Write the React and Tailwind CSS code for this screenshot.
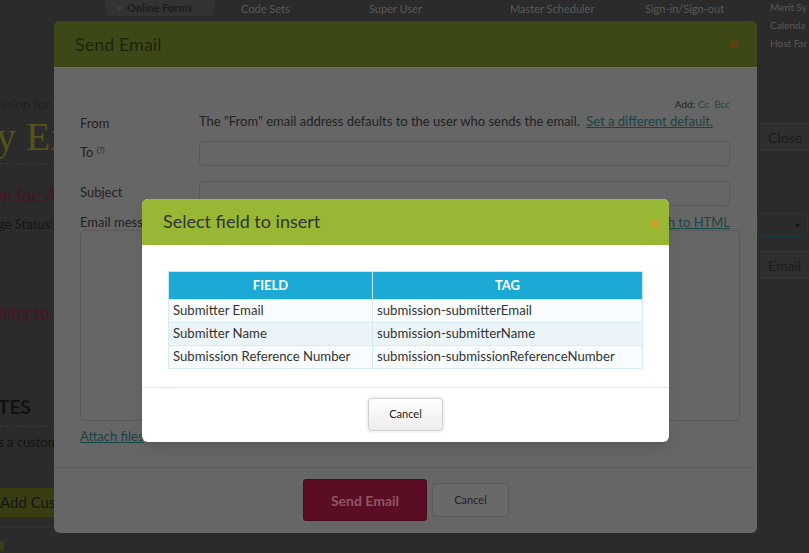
import { X } from 'lucide-react'

const font = { fontFamily: 'Lato, "Open Sans", sans-serif' }

function NavBar() {
  return (
    <div className="flex items-start h-[22px] text-[11px] text-[#5a5a5a] whitespace-nowrap">
      <div className="ml-[105px] w-[110px] h-[20px] -mt-[4px] pt-[4px] rounded-b-md bg-[#333] flex items-center pl-[11px] gap-[4px] text-[#1c1c1c] font-bold">
        <span className="text-[7px] text-[#444]">▼</span> Online Forms
      </div>
      <span className="ml-[26px] w-[128px] mt-[1px]">Code Sets</span>
      <span className="w-[141px] mt-[1px]">Super User</span>
      <span className="w-[135px] mt-[1px]">Master Scheduler</span>
      <span className="w-[125px] mt-[1px]">Sign-in/Sign-out</span>
    </div>
  )
}

function LeftSliver() {
  return (
    <div className="w-[54px] overflow-hidden whitespace-nowrap pt-[73px]">
      <div className="-ml-[2px] text-[13px] text-[#1e1e1e]">ission for</div>
      <div className="-ml-[4px] text-[40px] leading-[44px] text-[#55531b]" style={{ fontFamily: '"Liberation Serif", serif' }}>
        y Ex
      </div>
      <div className="border-b border-dashed border-[#3a3a3a] mt-[4px]" />
      <div className="-ml-[2px] mt-[18px] text-[18px] italic text-[#4a1122]">m for: A</div>
      <div className="-ml-[2px] mt-[6px] text-[13px] text-[#141414]">ge Status:</div>
      <div className="-ml-[2px] mt-[65px] text-[18px] italic text-[#4a1122]">ning to</div>
      <div className="-ml-[2px] mt-[67px] text-[19px] font-bold text-[#111]">TES</div>
      <div className="border-b border-dashed border-[#3a3a3a] mt-[4px]" />
      <div className="-ml-[2px] mt-[6px] text-[13px] text-[#141414]">s a custom</div>
      <div className="mt-[36px] h-[29px] w-[60px] bg-[#3a3d11] flex items-center text-[15px] text-[#151515]">Add Cus</div>
      <div className="mt-[10px] border-b border-[#333]" />
      <div className="mt-[13px] w-[4px] h-[10px] bg-[#3a3d11]" />
    </div>
  )
}

function RightSliver() {
  return (
    <div className="w-[52px] ml-auto whitespace-nowrap text-[#1a1a1a]">
      <div className="flex flex-col text-[10px] leading-[12px] text-[#5a5a5a] gap-[6px] -mt-[21px] pl-[13px]">
        <span>Merit Sy</span>
        <span>Calenda</span>
        <span>Host Far</span>
      </div>
      <div className="mt-[74px] h-[28px] ml-[3px] bg-[#2f2f2f] border-y border-[#363636] flex items-center pl-[8px] text-[14px]">Close</div>
      <div className="mt-[62px] h-[24px] mr-[1px] border border-[#1d3a46] rounded-sm flex items-center justify-end pr-[6px] text-[7px] text-[#111]">▼</div>
      <div className="mt-[14px] h-[28px] ml-[3px] bg-[#2f2f2f] border-y border-[#363636] flex items-center pl-[8px] text-[14px]">Email</div>
    </div>
  )
}

function FieldRow({ label, children, className = '' }) {
  return (
    <div className={`flex items-start ${className}`}>
      <div className="w-[119px] text-[13px] text-[#222] pt-[2px]">{label}</div>
      <div className="flex-1">{children}</div>
    </div>
  )
}

function SendEmailDialog() {
  return (
    <div className="absolute left-[54px] top-[21px] w-[703px] h-[512px] rounded-md overflow-hidden bg-[#666] flex flex-col">
      <div className="h-[47px] bg-[#3c4917] flex items-center justify-between px-[21px] border-b border-[#6e6e6e]">
        <span className="text-[18px] text-[#1f2410]">Send Email</span>
        <X size={12} strokeWidth={4} className="text-[#6e3a10] -mr-[4px]" />
      </div>
      <div className="flex-1 px-[26px] pt-[30px] pr-[27px]">
        <div className="text-right text-[10px] text-[#222] leading-[12px]">
          Add: <span className="text-[#1c4848]">Cc</span>&nbsp; <span className="text-[#1c4848]">Bcc</span>
        </div>
        <FieldRow label="From" className="mt-[2px]">
          <div className="text-[13px] text-[#222] whitespace-nowrap">
            The "From" email address defaults to the user who sends the email.{' '}
            <span className="underline text-[#1a4444] ml-[3px]">Set a different default.</span>
          </div>
        </FieldRow>
        <FieldRow label={<span>To <sup className="text-[8px] text-[#4a1020]">(?)</sup></span>} className="mt-[7px]">
          <div className="h-[25px] border border-[#595959] rounded-sm" />
        </FieldRow>
        <FieldRow label="Subject" className="mt-[15px]">
          <div className="h-[25px] border border-[#595959] rounded-sm" />
        </FieldRow>
        <div className="flex justify-between mt-[7px] text-[13px] text-[#222]">
          <span>Email message</span>
          <span className="underline text-[#1a4444]">Switch to HTML</span>
        </div>
        <div className="-mt-[2px] h-[191px] -mr-[10px] border border-[#595959] rounded-sm" />
        <div className="mt-[6px] text-[13px] underline text-[#1a4444]">Attach files</div>
      </div>
      <div className="h-[66px] border-t border-[#5c5c5c] flex items-start pl-[249px] pt-[11px] gap-[5px]">
        <div className="w-[124px] h-[42px] rounded-[3px] bg-[#5b0d24] border border-[#4a0a1c] flex items-center justify-center text-[14px] font-bold text-[#8e5665]">
          Send Email
        </div>
        <div className="mt-[4px] w-[77px] h-[34px] rounded-[3px] border border-[#5a5a5a] bg-[#696969] flex items-center justify-center text-[11px] text-[#222]">
          Cancel
        </div>
      </div>
    </div>
  )
}

const rows = [
  ['Submitter Email', 'submission-submitterEmail'],
  ['Submitter Name', 'submission-submitterName'],
  ['Submission Reference Number', 'submission-submissionReferenceNumber'],
]

function InsertFieldDialog() {
  return (
    <div className="absolute left-[142px] top-[199px] w-[527px] h-[243px] rounded-md overflow-hidden bg-white flex flex-col shadow-lg">
      <div className="h-[46px] bg-[#97b735] flex items-center justify-between pl-[21px] pr-[9px]">
        <span className="text-[18px] text-[#333] -mt-[2px]">Select field to insert</span>
        <X size={11} strokeWidth={4} className="text-[#f0942a] mt-[3px]" />
      </div>
      <div className="flex-1 px-[26px] pt-[26px]">
        <table className="w-[475px] border-collapse text-[13.2px] text-[#333]">
          <thead>
            <tr className="bg-[#1ba9d6] text-white h-[28px]">
              <th className="w-[204px] border border-[#c9e8f3] font-bold text-[13px]">FIELD</th>
              <th className="border border-[#c9e8f3] font-bold text-[13px]">TAG</th>
            </tr>
          </thead>
          <tbody>
            {rows.map(([f, t], i) => (
              <tr key={f} className={`h-[23px] ${i === 1 ? 'bg-[#ebf5f8]' : 'bg-[#f9fcfe]'}`}>
                <td className="border border-[#d2ebf4] pl-[4px]">{f}</td>
                <td className="border border-[#d2ebf4] pl-[4px]">{t}</td>
              </tr>
            ))}
          </tbody>
        </table>
      </div>
      <div className="h-[55px] border-t border-[#e6e6e6] flex justify-center pt-[8px]">
        <div className="p-[2px] rounded-md bg-[#f4f4f4] h-[37px]">
          <div className="w-[75px] h-[33px] rounded-[4px] border border-[#cfcfcf] bg-gradient-to-b from-white to-[#ededed] flex items-center justify-center text-[11px] text-[#222]">
            Cancel
          </div>
        </div>
      </div>
    </div>
  )
}

export default function App() {
  return (
    <div className="relative w-[809px] h-[553px] overflow-hidden bg-[#2b2b2b]" style={font}>
      <NavBar />
      <div className="flex">
        <LeftSliver />
        <RightSliver />
      </div>
      <SendEmailDialog />
      <InsertFieldDialog />
    </div>
  )
}
